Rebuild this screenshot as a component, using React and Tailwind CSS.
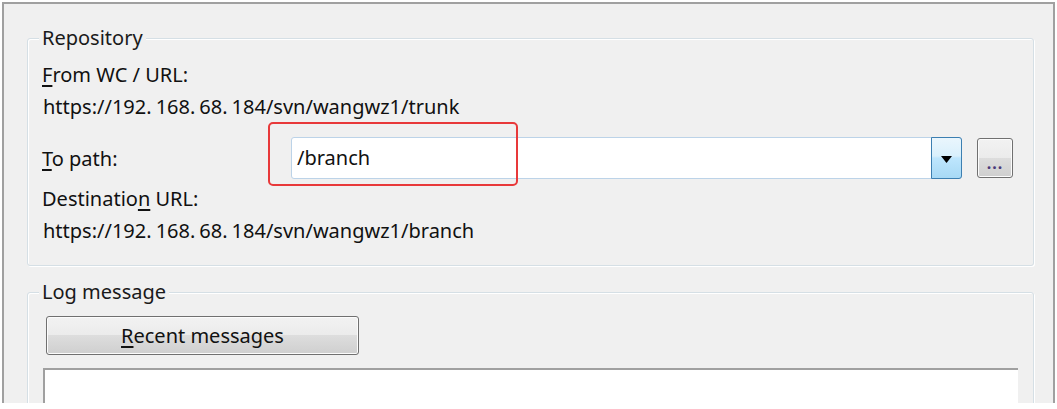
import React from 'react';

const font = { fontFamily: '"Noto Sans", "Open Sans", sans-serif' };

function GroupBox({ title, className = '', children }) {
    // etched windows groupbox: blue-grey line with a white line offset 1px
    return (
        <div className={`relative ml-[23px] mr-[19px] rounded-[3px] border border-[#d5dfe5] shadow-[1px_1px_0_#ffffff,inset_1px_1px_0_#ffffff] ${className}`}>
            <span className="absolute left-[11px] top-[-13px] bg-[#f0f0f0] px-[3px] text-[20px] leading-[24px] text-[#1a1a1a]">
                {title}
            </span>
            {children}
        </div>
    );
}

function PushButton({ className = '', children }) {
    return (
        <button className={`shrink-0 rounded-[3px] border border-[#707070] bg-[linear-gradient(#f2f2f2_0%,#ebebeb_50%,#dddddd_50%,#cfcfcf_100%)] shadow-[inset_0_0_0_1px_#fcfcfc] text-[20px] text-[#111] ${className}`}>
            {children}
        </button>
    );
}

function Url({ text }) {
    const parts = text.split('.');
    return (
        <div className="h-[32px] flex items-center text-[20px] text-[#111] pl-[1px]">
            {parts.map((p, i) => (
                <React.Fragment key={i}>
                    {p}
                    {i < parts.length - 1 && <span className="mr-[4px]">.</span>}
                </React.Fragment>
            ))}
        </div>
    );
}

export default function App() {
    return (
        <div className="w-[1057px] h-[409px] bg-white overflow-hidden" style={font}>
            <div className="ml-[2px] mt-[2px] w-[1053px] h-[401px] overflow-hidden border-x-2 border-t-2 border-[#a0a0a0] bg-[#f0f0f0]">
                {/* Repository */}
                <GroupBox title="Repository" className="mt-[34px] pl-[14px] pr-[19px] pt-[20px] pb-[18px]">
                    <div className="h-[32px] flex items-center text-[20px] text-[#111]">
                        <span><u className="underline-offset-[3px]">F</u>rom WC / URL:</span>
                    </div>
                    <Url text="https://192.168.68.184/svn/wangwz1/trunk" />
                    <div className="mt-[14px] h-[42px] flex items-center">
                        <div className="w-[249px] shrink-0 pt-[2px] text-[20px] text-[#111]">
                            <u className="underline-offset-[3px]">T</u>o path:
                        </div>
                        <div className="relative shrink-0">
                            {/* red highlight drawn over the combobox */}
                            <div className="absolute left-[-23px] top-[-15px] w-[250px] h-[64px] rounded-[5px] border-2 border-[#e8393a] pointer-events-none z-10" />
                            <div className="w-[671px] h-[42px] flex rounded-[3px] border border-[#bcd3e8] bg-white">
                                <div className="flex-1 flex items-center pl-[5px] text-[20px] text-[#111]">/branch</div>
                                <div className="w-[31px] -my-px -mr-px flex items-center justify-center rounded-r-[3px] border border-[#3c7fb1] bg-[linear-gradient(#eaf6fd_0%,#d9f0fc_45%,#bee6fd_50%,#a7d9f5_100%)]">
                                    <svg width="11" height="7" viewBox="0 0 11 7" className="mt-[3px]">
                                        <path d="M0 0h11L5.5 7z" fill="#000" />
                                    </svg>
                                </div>
                            </div>
                        </div>
                        <PushButton className="ml-[15px] w-[36px] h-[40px] flex items-end justify-center pb-[6px] leading-none">
                            <span className="text-[16px] font-bold tracking-[1px] text-[#4b3a7a]">...</span>
                        </PushButton>
                    </div>
                    <div className="mt-[4px] h-[32px] flex items-center text-[20px] text-[#111]">
                        <span>Destinatio<u className="underline-offset-[3px]">n</u> URL:</span>
                    </div>
                    <Url text="https://192.168.68.184/svn/wangwz1/branch" />
                </GroupBox>

                {/* Log message */}
                <GroupBox title="Log message" className="mt-[26px] h-[200px] pl-[15px] pr-[15px] pt-[23px]">
                    <PushButton className="ml-[3px] w-[313px] h-[39px] flex items-center justify-center">
                        <span><u className="underline-offset-[3px]">R</u>ecent messages</span>
                    </PushButton>
                    <div className="mt-[13px] h-[120px] bg-white border-t-2 border-l-2 border-[#a0a0a0]" />
                </GroupBox>
            </div>
        </div>
    );
}
